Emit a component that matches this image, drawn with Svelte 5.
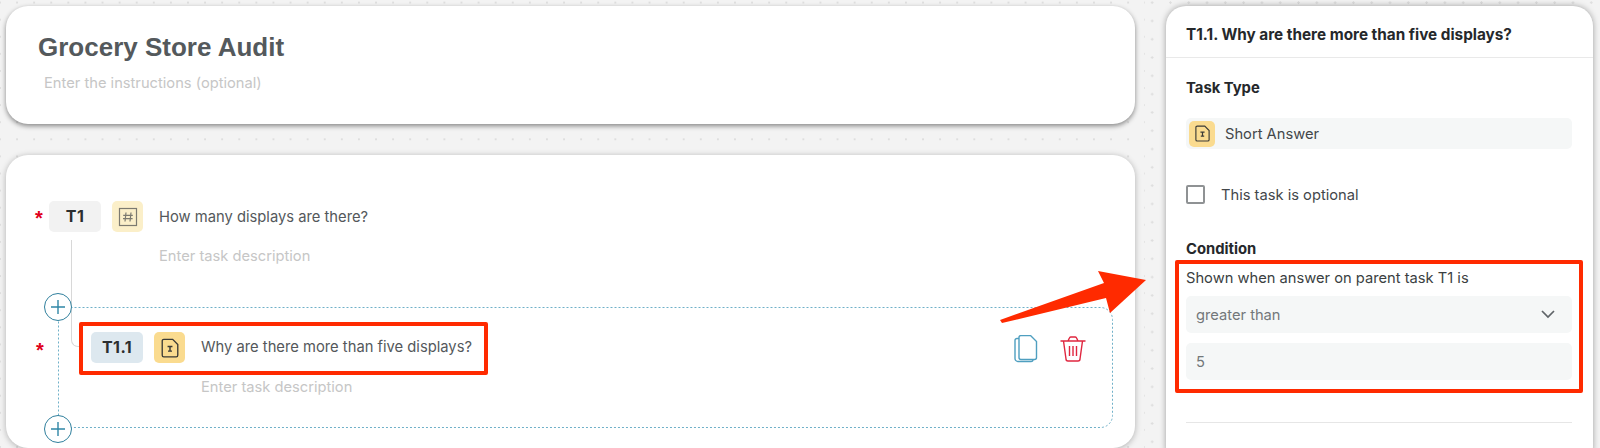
<script>
  // Task list editor with the settings panel for the selected subtask
</script>

{#snippet docIcon(size)}
  <svg width={size} height={size} viewBox="0 0 18 18" fill="none" stroke="#3a3a36" stroke-width="1.2">
    <path d="M2 2.6a1.4 1.4 0 0 1 1.4-1.4h8l4.6 4.6v9.8a1.4 1.4 0 0 1-1.4 1.4H3.4A1.4 1.4 0 0 1 2 15.6z" />
    <path d="M6.8 7.6h4.4M9 7.6v4.2M7.2 11.8h3.6" stroke-width="1.3" />
  </svg>
{/snippet}

{#snippet plus(cls)}
  <span class="plus {cls}">
    <svg width="16" height="16" viewBox="0 0 16 16" fill="none" stroke="#2f86a6" stroke-width="1.4">
      <path d="M8 1v14M1 8h14" />
    </svg>
  </span>
{/snippet}

<div class="page">
  <main class="canvas">
    <section class="card head-card">
      <h1>Grocery Store Audit</h1>
      <p class="instructions">Enter the instructions (optional)</p>
    </section>

    <section class="card tasks-card">
      <span class="tree-line"></span>

      <div class="task-row">
        <span class="req">*</span>
        <span class="badge">T1</span>
        <span class="type-icon pale">
          <svg width="20" height="20" viewBox="0 0 20 20" fill="none" stroke="#7c7a70" stroke-width="1.2">
            <rect x="1.5" y="1.5" width="17" height="17" />
            <path d="M8 5.5 7 14.5M13 5.5l-1 9M5.2 8.3h9.6M5 11.7h9.6" />
          </svg>
        </span>
        <span class="question">How many displays are there?</span>
      </div>
      <p class="desc top-desc">Enter task description</p>

      <div class="child">
        <!-- dotted frame: a css dotted border goes faint round the corners -->
        <svg class="frame" width="1055" height="121" fill="none" stroke="#6fb0c8" stroke-dasharray="2 2">
          <path d="M0.5 120.500V0.500H1042.500a12 12 0 0 1 12 12V108.500a12 12 0 0 1-12 12H0.500" />
        </svg>
        {@render plus("plus-top")}
        {@render plus("plus-bottom")}
        <span class="req child-req">*</span>
        <div class="child-row">
          <div class="red-box task-mark">
            <span class="badge blue">T1.1</span>
            <span class="type-icon">{@render docIcon(20)}</span>
            <span class="question">Why are there more than five displays?</span>
          </div>
          <div class="actions">
            <svg width="24" height="28" viewBox="0 0 24 28" fill="none" stroke="#4f9fc0" stroke-width="1.4">
              <path d="M5 2.5a2 2 0 0 1 2-2h9.5L22.5 6.5v16a2 2 0 0 1-2 2H7a2 2 0 0 1-2-2z" />
              <path d="M5 3.5H3a2 2 0 0 0-2 2v18a3 3 0 0 0 3 3h13a2 2 0 0 0 2-2" />
            </svg>
            <svg width="26" height="26" viewBox="0 0 26 26" fill="none" stroke="#e0263f" stroke-width="1.4">
              <path d="M0.5 5h25M8 5l1.4-3a1.5 1.5 0 0 1 1.3-1h4.6a1.5 1.5 0 0 1 1.3 1L18 5" />
              <path d="M3.5 5 6 23a2 2 0 0 0 2 2h10a2 2 0 0 0 2-2l2.500-18" />
              <path d="M9.500 10v10M13 10v10M16.500 10v10" />
            </svg>
          </div>
        </div>
        <p class="desc child-desc">Enter task description</p>
      </div>
    </section>
  </main>

  <aside class="side">
    <div class="panel">
      <header>T1.1. Why are there more than five displays?</header>
      <div class="panel-body">
        <h2>Task Type</h2>
        <div class="type-select">
          <span class="type-icon small">{@render docIcon(17)}</span>
          <span>Short Answer</span>
        </div>
        <label class="optional">
          <span class="checkbox"></span>
          <span>This task is optional</span>
        </label>
        <h2 class="condition-title">Condition</h2>
        <div class="red-box condition">
          <p>Shown when answer on parent task T1 is</p>
          <div class="field">
            <span>greater than</span>
            <svg width="14" height="9" viewBox="0 0 14 9" fill="none" stroke="#5f6468" stroke-width="1.700">
              <path d="M1 1l6 6 6-6" />
            </svg>
          </div>
          <div class="field">5</div>
        </div>
        <hr />
      </div>
    </div>
  </aside>

  <svg class="arrow" width="150" height="56" viewBox="0 0 150 56">
    <polygon fill="#ff2a00" points="0,49 104,12 98,0 146,9 110,42 106,27 2,52" />
  </svg>
</div>

<style>
  :global(body) {
    margin: 0;
  }
  .page {
    position: relative;
    display: flex;
    height: 448px;
    overflow: hidden;
    font-family: Inter, "Liberation Sans", sans-serif;
    color: #43474a;
  }
  .canvas {
    width: 1145px;
    box-sizing: border-box;
    padding: 6px 0 0 6px;
    display: flex;
    flex-direction: column;
    gap: 31px;
    background-color: #f3f3f3;
    background-image: radial-gradient(circle, #dedede 1px, transparent 1.4px);
    background-size: 17.1px 17.1px;
    background-position: 8.5px -6px;
  }
  .side {
    flex: 1;
    padding: 6px 7px 0 21px;
    background-color: #f3f3f3;
    background-image: radial-gradient(circle, #dedede 1px, transparent 1.4px);
    background-size: 18.3px 18.3px;
    background-position: -2px -6.500px;
  }
  .card {
    position: relative;
    flex: none;
    width: 1129px;
    box-sizing: border-box;
    background: #fff;
    border-radius: 22px;
    box-shadow: 0 1px 6px rgba(0, 0, 0, 0.28);
  }
  .head-card {
    height: 118px;
    padding: 25px 0 0 32px;
    box-shadow: 0 2px 5px rgba(0, 0, 0, 0.45);
  }
  h1 {
    margin: 0;
    font-size: 26px;
    line-height: 32px;
    font-weight: 700;
    color: #54595c;
    font-family: "Liberation Sans", sans-serif;
  }
  .instructions {
    margin: 10px 0 0 6px;
    font-size: 14.7px;
    line-height: 20px;
    color: #c6c6c6;
  }
  .tasks-card {
    height: 293px;
    padding-top: 46px;
  }
  .tree-line {
    position: absolute;
    left: 65px;
    top: 85px;
    width: 11px;
    height: 107px;
    box-sizing: border-box;
    border-left: 1px solid #d8d8d8;
    border-bottom: 1px solid #d8d8d8;
    border-bottom-left-radius: 7px;
  }
  .task-row {
    display: flex;
    align-items: center;
    margin-left: 29px;
  }
  .req {
    width: 14px;
    padding-top: 4px;
    color: #e0001b;
    font: 700 20px/27px "Liberation Sans", sans-serif;
  }
  .badge {
    width: 52px;
    height: 31px;
    border-radius: 5px;
    background: #f2f2f2;
    color: #2b2e30;
    font-size: 16px;
    font-weight: 700;
    letter-spacing: 0.4px;
    line-height: 31px;
    text-align: center;
  }
  .badge.blue {
    background: #dde8ef;
  }
  .type-icon {
    width: 31px;
    height: 31px;
    margin-left: 11px;
    border-radius: 5px;
    background: #fadb8f;
    display: flex;
    align-items: center;
    justify-content: center;
    flex: none;
  }
  .type-icon.pale {
    background: #fbefc9;
  }
  .type-icon.small {
    width: 26px;
    height: 26px;
    margin: 0 10px 0 3px;
  }
  .question {
    margin-left: 16px;
    font-size: 14.75px;
    color: #54585b;
    white-space: nowrap;
  }
  .desc {
    margin: 0;
    font-size: 14.7px;
    line-height: 20px;
    color: #c6c6c6;
  }
  .top-desc {
    margin: 14px 0 41px 153px;
  }
  .child {
    position: relative;
    margin-left: 52px;
    width: 1055px;
    height: 121px;
    box-sizing: border-box;
    padding-top: 15px;
  }
  .frame {
    position: absolute;
    inset: 0;
  }
  .plus {
    position: absolute;
    left: -14px;
    width: 28px;
    height: 28px;
    box-sizing: border-box;
    border: 1.5px solid #2f7f9d;
    border-radius: 50%;
    background: #fff;
    display: flex;
    align-items: center;
    justify-content: center;
  }
  .plus-top {
    top: -14px;
  }
  .plus-bottom {
    bottom: -15px;
  }
  .child-req {
    position: absolute;
    left: -22px;
    top: 26px;
  }
  .child-row {
    position: relative;
    display: flex;
    align-items: center;
    justify-content: space-between;
    padding-right: 27px;
  }
  .red-box {
    border: 4px solid #ff2a00;
    box-sizing: border-box;
    border-radius: 2px;
  }
  .task-mark {
    position: relative;
    margin-left: 21px;
    width: 409px;
    height: 53px;
    padding: 6px 8px 0;
    background: #fff;
    display: flex;
    align-items: flex-start;
  }
  .task-mark .question {
    line-height: 31px;
  }
  .actions {
    display: flex;
    align-items: center;
    gap: 22px;
  }
  .child-desc {
    margin: 2px 0 0 143px;
  }
  .panel {
    height: 460px;
    background: #fff;
    border-radius: 20px;
    box-shadow: 0 0 6px rgba(0, 0, 0, 0.35);
  }
  header {
    height: 52px;
    box-sizing: border-box;
    padding: 0 20px;
    line-height: 58px;
    border-bottom: 1px solid #e9e9e9;
    font-size: 15.3px;
    font-weight: 700;
    color: #25282b;
  }
  .panel-body {
    padding: 20px 21px 0 20px;
    color: #43474a;
    font-size: 14.7px;
  }
  h2 {
    margin: 0;
    font-size: 14.8px;
    line-height: 20px;
    font-weight: 700;
    color: #25282b;
  }
  .type-select {
    margin-top: 20px;
    height: 31px;
    display: flex;
    align-items: center;
    background: #f5f7f7;
    border-radius: 5px;
  }
  .optional {
    margin-top: 36px;
    display: flex;
    align-items: center;
    gap: 16px;
  }
  .checkbox {
    width: 19px;
    height: 19px;
    box-sizing: border-box;
    border: 2px solid #8f9294;
    border-radius: 2px;
  }
  .condition-title {
    margin-top: 35px;
  }
  .condition {
    margin: 1px -11px 0;
    height: 133px;
    padding: 4px 7px 0;
  }
  .condition p {
    margin: 0 0 8px;
    line-height: 20px;
    color: #3b3f42;
  }
  .field {
    height: 37px;
    margin-bottom: 10px;
    padding: 0 17px 0 10px;
    display: flex;
    align-items: center;
    justify-content: space-between;
    background: #f5f7f7;
    border-radius: 5px;
    color: #73777a;
  }
  hr {
    margin: 29px 0 0;
    border: none;
    border-top: 1px solid #e6e6e6;
  }
  .arrow {
    position: absolute;
    left: 1000px;
    top: 271px;
  }
</style>
